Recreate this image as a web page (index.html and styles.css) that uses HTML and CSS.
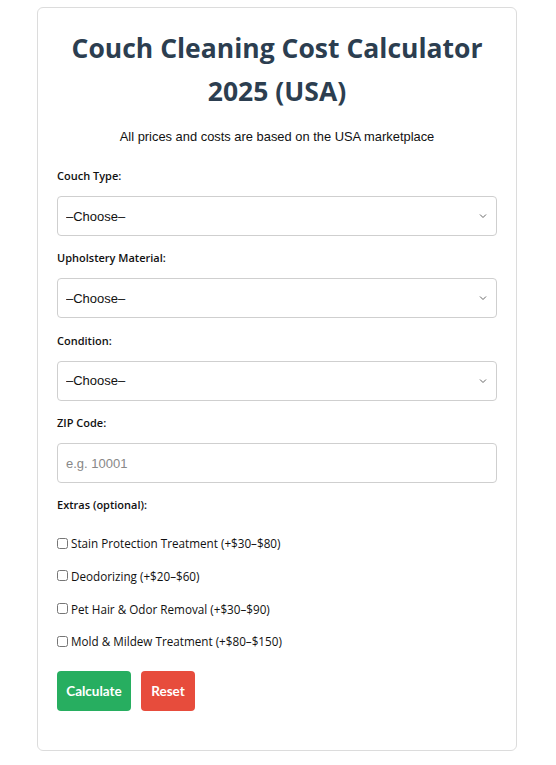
FILE: index.html
```html
<!DOCTYPE html>
<html lang="en">
<head>
<meta charset="utf-8">
<title>Couch Cleaning Cost Calculator 2025 (USA)</title>
<link rel="stylesheet" href="styles.css">
</head>
<body>
<div class="card">
  <h1 class="title">Couch Cleaning Cost Calculator 2025 (USA)</h1>
  <p class="subtitle">All prices and costs are based on the USA marketplace</p>

  <div class="group">
    <label class="label" for="type">Couch Type:</label>
    <div class="select-wrap">
      <select id="type" class="field"><option>–Choose–</option></select>
      <svg class="chev" width="8" height="6" viewBox="0 0 8 6"><path d="M1 1.5 L4 4.5 L7 1.5" fill="none" stroke="#666" stroke-width="1"/></svg>
    </div>
  </div>
  <div class="group">
    <label class="label" for="mat">Upholstery Material:</label>
    <div class="select-wrap">
      <select id="mat" class="field"><option>–Choose–</option></select>
      <svg class="chev" width="8" height="6" viewBox="0 0 8 6"><path d="M1 1.5 L4 4.5 L7 1.5" fill="none" stroke="#666" stroke-width="1"/></svg>
    </div>
  </div>
  <div class="group">
    <label class="label" for="cond">Condition:</label>
    <div class="select-wrap">
      <select id="cond" class="field"><option>–Choose–</option></select>
      <svg class="chev" width="8" height="6" viewBox="0 0 8 6"><path d="M1 1.5 L4 4.5 L7 1.5" fill="none" stroke="#666" stroke-width="1"/></svg>
    </div>
  </div>
  <div class="group">
    <label class="label" for="zip">ZIP Code:</label>
    <input id="zip" class="field" type="text" placeholder="e.g. 10001">
  </div>

  <div class="label extras-label">Extras (optional):</div>
  <label class="check"><input type="checkbox"> Stain Protection Treatment (+$30–$80)</label>
  <label class="check"><input type="checkbox"> Deodorizing (+$20–$60)</label>
  <label class="check"><input type="checkbox"> Pet Hair &amp; Odor Removal (+$30–$90)</label>
  <label class="check"><input type="checkbox"> Mold &amp; Mildew Treatment (+$80–$150)</label>

  <div class="buttons">
    <button class="btn calc" type="button">Calculate</button>
    <button class="btn reset" type="button">Reset</button>
  </div>
</div>
</body>
</html>
```
FILE: styles.css
```css
html, body {
  margin: 0;
  padding: 0;
  background: #fff;
}
body {
  padding: 7px 0 0 37px;
}
.card {
  box-sizing: border-box;
  width: 480px;
  height: 744px;
  border: 1px solid #dcdcdc;
  border-radius: 6px;
  padding: 19px 19px 20px 19px;
  background: #fff;
  font-family: "Open Sans", sans-serif;
}
.title {
  margin: 0;
  text-align: center;
  font-family: "Open Sans", sans-serif;
  font-weight: 700;
  font-size: 26.5px;
  line-height: 43px;
  color: #2c3e50;
}
.subtitle {
  margin: 15px 0 0 0;
  text-align: center;
  font-family: "Liberation Sans", Arial, sans-serif;
  font-size: 12.9px;
  line-height: 17px;
  color: #111;
}
.group {
  margin-top: 23px;
}
.group + .group {
  margin-top: 14.4px;
}
.label {
  display: block;
  font-family: "Open Sans", sans-serif;
  font-weight: 600;
  font-size: 11px;
  line-height: 16px;
  color: #111;
  margin-bottom: 12px;
}
.select-wrap {
  position: relative;
}
.field {
  box-sizing: border-box;
  display: block;
  width: 100%;
  height: 40px;
  border: 1px solid #cfcfcf;
  border-radius: 4px;
  background: #fff;
  padding: 0 8px;
  font-family: "Liberation Sans", Arial, sans-serif;
  font-size: 13px;
  color: #111;
  -webkit-appearance: none;
  appearance: none;
  outline: none;
}
.field::placeholder {
  color: #888;
}
.chev {
  position: absolute;
  right: 10px;
  top: 17px;
}
.extras-label {
  margin-top: 14px;
  margin-bottom: 22px;
}
.check {
  display: flex;
  align-items: center;
  gap: 3px;
  font-family: "Open Sans", sans-serif;
  font-size: 11.7px;
  line-height: 16px;
  color: #111;
  margin-bottom: 16.7px;
}
.check input {
  margin: 0;
  width: 11px;
  height: 11px;
}
.buttons {
  display: flex;
  gap: 10px;
  margin-top: 22px;
}
.btn {
  height: 40px;
  border: none;
  border-radius: 4px;
  color: #fff;
  font-family: Lato, sans-serif;
  font-weight: 700;
  font-size: 13.5px;
  padding: 0;
}
.calc {
  background: #27ae60;
  width: 74px;
}
.reset {
  background: #e74c3c;
  width: 54px;
}
```
